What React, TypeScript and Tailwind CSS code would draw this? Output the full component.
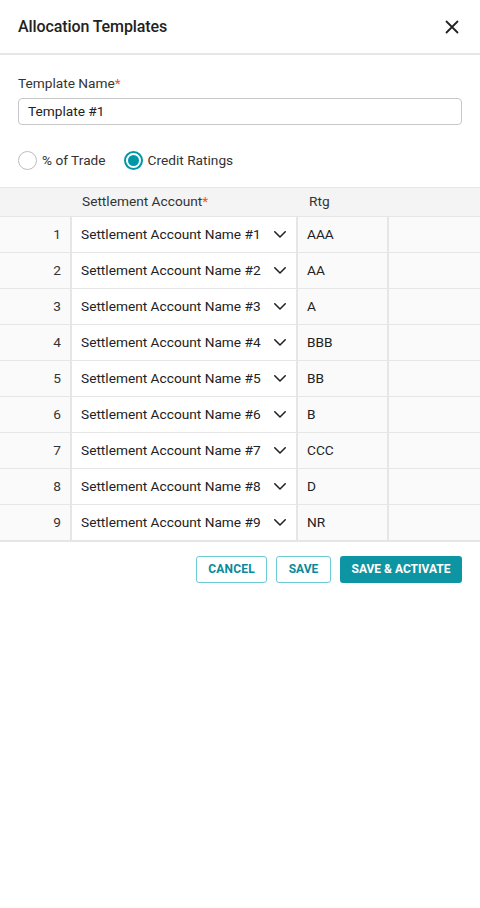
import React from "react";

const rows = [
  { n: 1, rtg: "AAA" },
  { n: 2, rtg: "AA" },
  { n: 3, rtg: "A" },
  { n: 4, rtg: "BBB" },
  { n: 5, rtg: "BB" },
  { n: 6, rtg: "B" },
  { n: 7, rtg: "CCC" },
  { n: 8, rtg: "D" },
  { n: 9, rtg: "NR" },
];

function Chevron() {
  return (
    <svg width="18" height="18" viewBox="0 0 24 24" fill="none" stroke="#222" strokeWidth="2.1" strokeLinecap="round" strokeLinejoin="round">
      <path d="M5 9l7 7 7-7" />
    </svg>
  );
}

export default function App() {
  return (
    <div className="w-[480px] h-[908px] bg-white text-[#222] [font-family:Roboto,'Noto_Sans',sans-serif]">
      <div className="h-[55px] flex items-center justify-between pl-[18px] pr-[21px] border-b-2 border-[#e6e6e6]">
        <h1 className="text-[16px] font-medium text-[#222] pt-[1px] tracking-[-0.1px]">Allocation Templates</h1>
        <svg width="14" height="14" viewBox="0 0 14 14" stroke="#222" strokeWidth="1.8" strokeLinecap="round">
          <path d="M1.5 1.5l11 11M12.5 1.5l-11 11" />
        </svg>
      </div>

      <div className="px-[18px] pt-[19px] text-[13.7px]">
        <div className="leading-[18px] text-[#333]">
          Template Name<span className="text-[#f4511e]">*</span>
        </div>
        <div className="mt-[6px] h-[27px] border border-[#c8c8c8] rounded-[4px] flex items-center px-[9px] text-[#222]">
          Template #1
        </div>

        <div className="mt-[25px] flex items-center gap-[18px] text-[#333]">
          <label className="flex items-center gap-[5px]">
            <span className="w-[19px] h-[19px] rounded-full border border-[#bdbdbd] bg-white" />
            % of Trade
          </label>
          <label className="flex items-center gap-[5px]">
            <span className="w-[19px] h-[19px] rounded-full border-2 border-[#0097a7] bg-white flex items-center justify-center">
              <span className="w-[11px] h-[11px] rounded-full bg-[#0097a7]" />
            </span>
            Credit Ratings
          </label>
        </div>
      </div>

      <div className="mt-[16px] text-[13.7px]">
        <div className="grid grid-cols-[72px_226px_91px_1fr] h-[29px] bg-[#f4f4f4] border-t border-[#e6e6e6] items-center text-[#333]">
          <div />
          <div className="pl-[10px]">
            Settlement Account<span className="text-[#f4511e]">*</span>
          </div>
          <div className="pl-[11px]">Rtg</div>
          <div />
        </div>
        {rows.map((r) => (
          <div key={r.n} className="grid grid-cols-[72px_226px_91px_1fr] h-[36px] border-t border-[#e6e6e6] bg-[#fafafa]">
            <div className="flex items-center justify-end pr-[9px] border-r-2 border-[#e6e6e6] text-[#333]">{r.n}</div>
            <div className="flex items-center justify-between bg-white pl-[9px] pr-[7px] border-r-2 border-[#e6e6e6]">
              <span>Settlement Account Name #{r.n}</span>
              <Chevron />
            </div>
            <div className="flex items-center pl-[9px] border-r-2 border-[#e6e6e6]">{r.rtg}</div>
            <div />
          </div>
        ))}
        <div className="border-t-2 border-[#e6e6e6]" />
      </div>

      <div className="flex justify-end gap-[9px] px-[18px] pt-[14px]">
        <button className="h-[27px] w-[71px] border border-[#6dcbd4] rounded-[3px] text-[#0a8a99] text-[12px] font-bold tracking-[0.2px]">
          CANCEL
        </button>
        <button className="h-[27px] w-[55px] border border-[#6dcbd4] rounded-[3px] text-[#0a8a99] text-[12px] font-bold">
          SAVE
        </button>
        <button className="h-[27px] w-[122px] rounded-[3px] bg-[#0e95a3] text-white text-[12px] font-bold">
          SAVE &amp; ACTIVATE
        </button>
      </div>
    </div>
  );
}
